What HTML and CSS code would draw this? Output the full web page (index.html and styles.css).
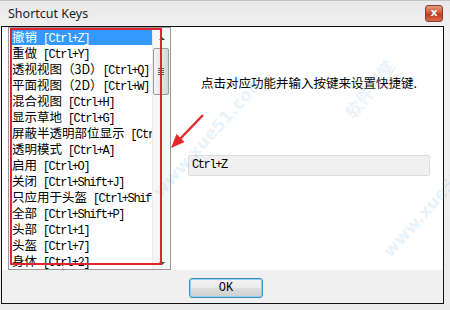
FILE: index.html
```html
<!DOCTYPE html>
<html lang="zh-cn">

<head>
  <meta charset="utf-8" />
  <title>Shortcut Keys</title>
  <link rel="stylesheet" href="styles.css">
</head>

<body>
  <div id="window">
    <div class="titlebar">
      <span class="title">Shortcut Keys</span>
      <span class="close">x</span>
    </div>

    <div class="client">
      <div class="main">
        <div class="listbox">
          <ul class="items">
            <li class="selected">撤销<span class="key"> [Ctrl+Z]</span></li>
            <li>重做<span class="key"> [Ctrl+Y]</span></li>
            <li>透视视图（3D）<span class="key">[Ctrl+Q]</span></li>
            <li>平面视图（2D）<span class="key">[Ctrl+W]</span></li>
            <li>混合视图<span class="key"> [Ctrl+H]</span></li>
            <li>显示草地<span class="key"> [Ctrl+G]</span></li>
            <li>屏蔽半透明部位显示<span class="key"> [Ctrl+B]</span></li>
            <li>透明模式<span class="key"> [Ctrl+A]</span></li>
            <li>启用<span class="key"> [Ctrl+O]</span></li>
            <li>关闭<span class="key"> [Ctrl+Shift+J]</span></li>
            <li>只应用于头盔<span class="key"> [Ctrl+Shift+H]</span></li>
            <li>全部<span class="key"> [Ctrl+Shift+P]</span></li>
            <li>头部<span class="key"> [Ctrl+1]</span></li>
            <li>头盔<span class="key"> [Ctrl+7]</span></li>
            <li>身体<span class="key"> [Ctrl+2]</span></li>
          </ul>
          <div class="scrollbar">
            <span class="sb-btn"><i class="arrow up"></i></span>
            <span class="thumb"><i></i></span>
            <span class="track"></span>
            <span class="sb-btn"><i class="arrow down"></i></span>
          </div>
        </div>

        <div class="side">
          <p class="hint">点击对应功能并输入按键来设置快捷键.</p>
          <div class="field">Ctrl+Z</div>
        </div>
      </div>

      <div class="footer">
        <button class="ok">OK</button>
      </div>
    </div>

    <!-- watermark -->
    <span class="wm wm-a">www.xue51.com</span>
    <span class="wm wm-b">软件学堂</span>
    <span class="wm wm-c">www.xue51.com</span>

    <!-- annotation -->
    <div class="mark-box"></div>
    <svg class="mark-arrow" width="60" height="55" viewBox="0 0 60 55">
      <line x1="43" y1="10" x2="20" y2="34" stroke="#e5262d" stroke-width="2.4" />
      <polygon points="11,43 24.5,37 16.5,29" fill="#e5262d" />
    </svg>
  </div>
</body>

</html>
```

FILE: styles.css
```css
body {
  margin: 0px;
  background: #ececec;
}

ul {
  list-style: none;
  margin: 0;
  padding: 0;
}

#window {
  position: relative;
  width: 450px;
  height: 310px;
  overflow: hidden;
  box-sizing: border-box;
  border-top: 1px solid #c4c4c4;
  background: linear-gradient(#e9e9e9, #f1f1f1 30px, #ececec);
}

.titlebar {
  display: flex;
  align-items: flex-start;
  height: 25px;
}

.title {
  margin: 5px 0 0 8px;
  font-family: "Noto Sans", "Liberation Sans", sans-serif;
  font-size: 12.5px;
  line-height: 16px;
  color: #1e1e1e;
}

.close {
  margin: 4px 7px 0 auto;
  width: 18px;
  height: 17px;
  box-sizing: border-box;
  border: 1px solid #8e3b2c;
  border-radius: 3px;
  background: linear-gradient(#e49a86, #cf5838 45%, #c23c1f 55%, #d76a4c);
  color: #fff;
  font-family: "DejaVu Sans", sans-serif;
  font-weight: bold;
  font-size: 11px;
  line-height: 14px;
  text-align: center;
  text-shadow: 0 0 1px #5a1a0c;
}

.client {
  margin-left: 1px;
  width: 443px;
  height: 278px;
  box-sizing: border-box;
  border: 1px solid #111;
  display: flex;
  flex-direction: column;
}

.main {
  display: flex;
  height: 243px;
  background: #fff;
}

.listbox {
  display: flex;
  margin-left: 6px;
  width: 163px;
  height: 243px;
  box-sizing: border-box;
  border: 1px solid #9a9a9a;
}

.items {
  width: 143px;
  padding: 1px 0 0 0;
  overflow: hidden;
  font-family: "Noto Sans CJK SC", sans-serif;
  font-size: 12.5px;
  color: #000;
}

.items li {
  height: 16px;
  line-height: 16px;
  padding-left: 2px;
  margin-left: 1px;
  white-space: nowrap;
}

.items li.selected {
  background: #3399ff;
  color: #fff;
}

.key,
.field,
.ok {
  font-family: "Liberation Mono", monospace;
  font-size: 12px;
  letter-spacing: -1.4px;
}

.scrollbar {
  display: flex;
  flex-direction: column;
  width: 17px;
  background: #f6f6f6;
  border-left: 1px solid #ececec;
}

.sb-btn {
  height: 17px;
  display: flex;
  align-items: center;
  justify-content: center;
}

.arrow {
  width: 0;
  height: 0;
  border-left: 3px solid transparent;
  border-right: 3px solid transparent;
}

.arrow.up {
  border-bottom: 3px solid #3c3c3c;
  margin-top: 3px;
}

.arrow.down {
  border-top: 3px solid #3c3c3c;
  margin-top: 6px;
}

.thumb {
  margin: 3px 1px 0 0;
  height: 47px;
  box-sizing: border-box;
  border: 1px solid #9c9c9c;
  border-radius: 2px;
  background: linear-gradient(90deg, #f4f4f4, #e6e6e6 50%, #d6d6d6);
  display: flex;
  align-items: center;
  justify-content: center;
}

.thumb i {
  width: 6px;
  height: 7px;
  background: repeating-linear-gradient(#5d5d5d 0 1px, transparent 1px 2px);
}

.track {
  flex: 1;
}

.side {
  flex: 1;
  padding: 0 13px 0 17px;
}

.hint {
  margin: 48px 0 0 0;
  font-family: "Noto Sans CJK SC", sans-serif;
  font-size: 12.5px;
  line-height: 16px;
  text-align: center;
  color: #000;
}

.field {
  margin-top: 64px;
  height: 21px;
  box-sizing: border-box;
  border: 1px solid #dcdcdc;
  border-radius: 2px;
  background: #f0f0f0;
  padding-left: 3px;
  line-height: 19px;
  color: #000;
}

.footer {
  flex: 1;
  background: #f0f0f0;
  padding: 7px 0 0 187px;
}

.ok {
  width: 74px;
  height: 20px;
  box-sizing: border-box;
  border: 1px solid #3c8fc4;
  border-radius: 3px;
  box-shadow: inset 0 0 0 1px #8fd1f2;
  background: linear-gradient(#f4f4f4, #ebebeb 50%, #dddddd 51%, #cfcfcf);
  color: #000;
  padding: 0;
  letter-spacing: 0;
  line-height: 18px;
}

.wm {
  position: absolute;
  font-family: "DejaVu Sans", "Noto Sans CJK SC", sans-serif;
  font-weight: bold;
  font-size: 17px;
  color: rgba(120, 180, 235, 0.18);
  white-space: nowrap;
  pointer-events: none;
}

.wm-a {
  left: 130px;
  top: 125px;
  transform: rotate(-48deg);
}

.wm-b {
  left: 335px;
  top: 75px;
  transform: rotate(-52deg);
}

.wm-c {
  left: 360px;
  top: 185px;
  transform: rotate(-48deg);
}

.mark-box {
  position: absolute;
  left: 10px;
  top: 27px;
  width: 152px;
  height: 237px;
  box-sizing: border-box;
  border: 2px solid #e0232f;
}

.mark-arrow {
  position: absolute;
  left: 160px;
  top: 104px;
}
```
